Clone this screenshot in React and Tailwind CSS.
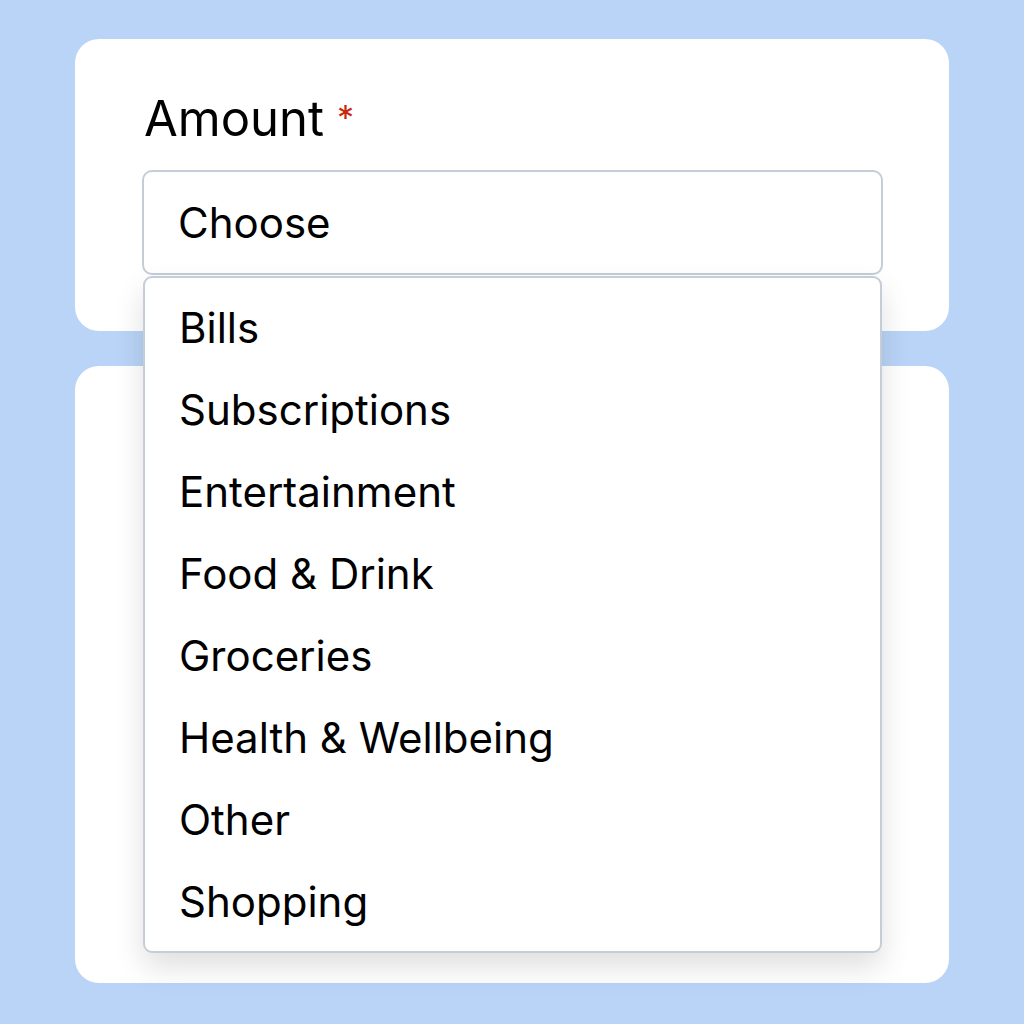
import React from 'react';

const categories = [
  'Bills',
  'Subscriptions',
  'Entertainment',
  'Food & Drink',
  'Groceries',
  'Health & Wellbeing',
  'Other',
  'Shopping',
];

const App = () => {
  return (
    <div
      className="min-h-[1024px] bg-[#b9d4f7] px-[75px] pt-[39px] flex flex-col gap-[35px]"
      style={{ fontFamily: 'Inter, "Noto Sans", sans-serif' }}
    >
      {/* top card with the select */}
      <div className="h-[292px] bg-white rounded-[24px] pl-[67px] pr-[66px] pt-[56px]">
        <div className="flex items-start pl-[2px] text-[49px] leading-[48px] text-black">
          <span>Amount</span>
          <span className="ml-[13px] text-[34px] leading-[34px] mt-[6px] text-[#c92a0e]">*</span>
        </div>
        <div className="relative mt-[27px]">
          <div className="h-[105px] border-2 border-[#c5cdd9] rounded-[10px] bg-white flex items-center pl-[34px] text-[42px] text-black">
            Choose
          </div>

          {/* open dropdown */}
          <div className="absolute z-10 left-[1px] right-[1px] top-[106px] h-[677px] bg-white border-2 border-[#c5cdd9] rounded-[9px] shadow-[0_14px_30px_rgba(0,0,0,0.13)] pt-[9px] pl-[34px]">
            {categories.map((c) => (
              <div key={c} className="h-[82px] leading-[82px] text-[42px] text-black">
                {c}
              </div>
            ))}
          </div>
        </div>
      </div>

      {/* lower card, covered by the list */}
      <div className="h-[617px] bg-white rounded-[24px]" />
    </div>
  );
};

export default App;
